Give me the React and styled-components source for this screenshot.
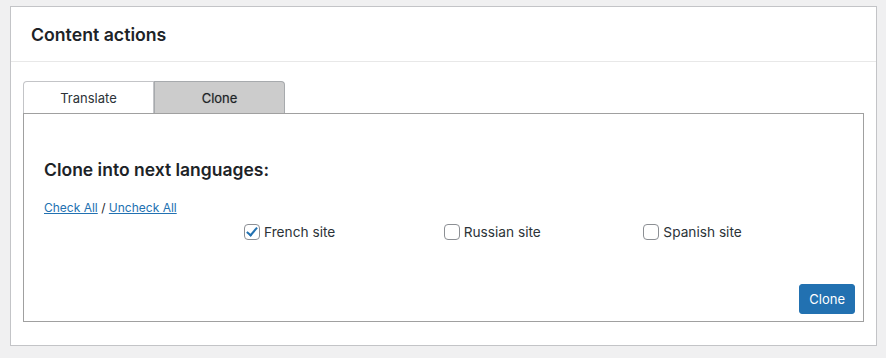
import styled, { createGlobalStyle } from 'styled-components';
import { useState } from 'react';

const GlobalStyle = createGlobalStyle`
  body {
    margin: 0;
    background: #f0f0f1;
    font-family: Inter, "Liberation Sans", Arial, sans-serif;
    color: #1d2327;
  }
`;

const sites = [
  { id: 'fr', label: 'French site' },
  { id: 'ru', label: 'Russian site' },
  { id: 'es', label: 'Spanish site' },
];

export default function App() {
  const [checked, setChecked] = useState({ fr: true, ru: false, es: false });

  const toggle = (id) => setChecked({ ...checked, [id]: !checked[id] });

  return (
    <Page>
      <GlobalStyle />
      <Card>
        <CardHeader>
          <CardTitle>Content actions</CardTitle>
        </CardHeader>
        <CardBody>
          <Tabs>
            <Tab>Translate</Tab>
            <Tab active>Clone</Tab>
          </Tabs>
          <TabPanel>
            <Heading>Clone into next languages:</Heading>
            <Links>
              <Link href="#">Check All</Link> / <Link href="#">Uncheck All</Link>
            </Links>
            <SiteRow>
              {sites.map((s) => (
                <SiteLabel key={s.id}>
                  <Check type="checkbox" checked={checked[s.id]} onChange={() => toggle(s.id)} />
                  {s.label}
                </SiteLabel>
              ))}
            </SiteRow>
            <Footer>
              <Button>Clone</Button>
            </Footer>
          </TabPanel>
        </CardBody>
      </Card>
    </Page>
  );
}

const Page = styled.div`
  padding: 6px 9px 0 10px;
`
const Card = styled.div`
  background: #fff;
  border: 1px solid #c3c4c7;
  height: 340px;
  box-sizing: border-box;
`
const CardHeader = styled.div`
  height: 54px;
  display: flex;
  align-items: center;
  padding: 0 20px;
  border-bottom: 1px solid #e8e8e8;
`
const CardTitle = styled.h2`
  margin: 0;
  font-size: 17.7px;
  font-weight: 600;
  color: #1d2327;
`
const CardBody = styled.div`
  padding: 19px 12px 0 12px;
`
const Tabs = styled.div`
  display: flex;
  height: 32px;
`
const Tab = styled.div`
  width: 131px;
  box-sizing: border-box;
  display: flex;
  align-items: center;
  justify-content: center;
  font-size: 13px;
  color: #2c3338;
  border: 1px solid ${(p) => (p.active ? '#a7aaad' : '#c3c4c7')};
  border-bottom: none;
  background: ${(p) => (p.active ? '#cccccc' : '#fff')};
  border-radius: ${(p) => (p.active ? '0 4px 0 0' : '4px 0 0 0')};
  ${(p) => p.active && 'color: #1d2327; text-shadow: 0 0 1px rgba(0,0,0,0.35);'}
  & + & {
    border-left: 1px solid #a7aaad;
  }
`
const TabPanel = styled.div`
  border: 1px solid #a0a0a0;
  height: 209px;
  box-sizing: border-box;
  padding: 44px 20px 0 20px;
  position: relative;
`
const Heading = styled.h3`
  margin: 0;
  font-size: 17.5px;
  font-weight: 600;
  line-height: 24px;
  color: #1d2327;
`
const Links = styled.div`
  margin-top: 18px;
  font-size: 12px;
  line-height: 16px;
  color: #1d2327;
`
const Link = styled.a`
  color: #2271b1;
  text-decoration: underline;
`
const SiteRow = styled.div`
  display: flex;
  margin-top: 8px;
  padding-left: 200px;
`
const SiteLabel = styled.label`
  width: 200px;
  display: flex;
  align-items: center;
  gap: 4px;
  font-size: 13.7px;
  color: #2c3338;
`
const Check = styled.input`
  appearance: none;
  margin: 0;
  width: 16px;
  height: 16px;
  border: 1px solid #8c8f94;
  border-radius: 4px;
  background: #fff;
  position: relative;
  &:checked::before {
    content: '';
    position: absolute;
    left: 4px;
    top: 0px;
    width: 4px;
    height: 9px;
    border: solid #2271b1;
    border-width: 0 2.5px 2.5px 0;
    transform: rotate(40deg);
  }
`
const Footer = styled.div`
  position: absolute;
  right: 8px;
  bottom: 7px;
`
const Button = styled.button`
  background: #2271b1;
  color: #fff;
  border: 1px solid #2271b1;
  border-radius: 3px;
  font-family: inherit;
  font-size: 13px;
  height: 30px;
  padding: 0 9px;
  cursor: pointer;
`
